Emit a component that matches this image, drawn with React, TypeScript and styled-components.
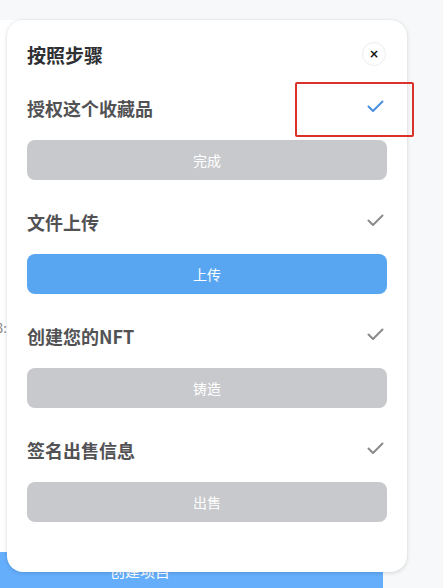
import React from "react";
import styled, { createGlobalStyle } from "styled-components";

const GlobalStyle = createGlobalStyle`
  html, body {
    margin: 0;
    padding: 0;
  }
  body {
    background: #f7f8fa;
    font-family: "Noto Sans CJK SC", "Noto Sans", "Liberation Sans", sans-serif;
  }
`;

type Step = {
  title: string;
  action: string;
  active?: boolean;
  done?: boolean;
};

const steps: Step[] = [
  { title: "授权这个收藏品", action: "完成", done: true },
  { title: "文件上传", action: "上传", active: true },
  { title: "创建您的NFT", action: "铸造" },
  { title: "签名出售信息", action: "出售" },
];

const CheckIcon: React.FC<{ color: string }> = ({ color }) => (
  <svg width="17" height="13" viewBox="0 0 17 13" fill="none">
    <path
      d="M1.5 6.5 L6 11 L15.5 1.5"
      stroke={color}
      strokeWidth="2"
      strokeLinecap="round"
      strokeLinejoin="round"
    />
  </svg>
);

const App: React.FC = () => {
  return (
    <>
      <GlobalStyle />
      <Page>
        <Main>
          <SideNote>3:</SideNote>
          <CreateButton>创建项目</CreateButton>
        </Main>

        <Modal>
          <Header>
            <Title>按照步骤</Title>
            <CloseButton>×</CloseButton>
          </Header>
          {steps.map((s) => (
            <StepBlock key={s.title}>
              <StepHead>
                <StepTitle>{s.title}</StepTitle>
                <CheckBox>
                  <CheckIcon color={s.done ? "#4a8fe0" : "#8a8a8a"} />
                </CheckBox>
              </StepHead>
              <ActionButton active={s.active}>{s.action}</ActionButton>
            </StepBlock>
          ))}
        </Modal>

        <Highlight />
      </Page>
    </>
  );
};

const Page = styled.div`
  position: relative;
  width: 443px;
  height: 588px;
  overflow: hidden;
`;

const Main = styled.div`
  width: 383px;
  height: 568px;
  margin-top: 20px;
  background: #ffffff;
  display: flex;
  flex-direction: column;
  justify-content: space-between;
`;

const SideNote = styled.span`
  margin-top: 298px;
  margin-left: -4px;
  font-size: 13px;
  color: #888;
`;

const CreateButton = styled.div`
  height: 36px;
  background: #64aefc;
  color: #fff;
  font-size: 15px;
  display: flex;
  align-items: center;
  justify-content: center;
  padding-right: 103px;
`;

const Modal = styled.div`
  position: absolute;
  left: 7px;
  top: 20px;
  width: 400px;
  box-sizing: border-box;
  padding: 22px 20px 50px;
  background: #ffffff;
  border-radius: 16px;
  box-shadow: 0 1px 4px rgba(0, 0, 0, 0.14), 0 0 1px rgba(0, 0, 0, 0.1);
  display: flex;
  flex-direction: column;
  gap: 28px;
`;

const Header = styled.div`
  height: 24px;
  display: flex;
  align-items: center;
  justify-content: space-between;
`;

const Title = styled.h2`
  margin: 0;
  font-size: 19px;
  font-weight: 700;
  color: #2e3033;
`;

const CloseButton = styled.div`
  width: 24px;
  height: 24px;
  margin-right: 1px;
  border-radius: 50%;
  border: 1px solid #ededed;
  box-sizing: border-box;
  display: flex;
  align-items: center;
  justify-content: center;
  font-family: "DejaVu Sans", sans-serif;
  font-size: 12px;
  font-weight: 700;
  color: #111;
  line-height: 1;
`;

const StepBlock = styled.div`
  display: flex;
  flex-direction: column;
  gap: 16px;
`;

const StepHead = styled.div`
  height: 30px;
  margin-top: -1px;
  margin-bottom: 1px;
  display: flex;
  align-items: center;
  justify-content: space-between;
`;

const StepTitle = styled.span`
  font-size: 18px;
  font-weight: 700;
  color: #525255;
`;

const CheckBox = styled.span`
  display: flex;
  margin-right: 3px;
  margin-top: -3px;
`;

const ActionButton = styled.button<{ active?: boolean }>`
  height: 40px;
  border: none;
  border-radius: 8px;
  background: ${(p) => (p.active ? "#58a6f2" : "#c8c9cc")};
  color: #ffffff;
  font-family: inherit;
  font-size: 14px;
  font-weight: 400;
  cursor: pointer;
`;

const Highlight = styled.div`
  position: absolute;
  left: 295px;
  top: 82px;
  width: 119px;
  height: 55px;
  box-sizing: border-box;
  border: 2px solid #d8322a;
  border-radius: 2px;
  pointer-events: none;
`;

export default App;
